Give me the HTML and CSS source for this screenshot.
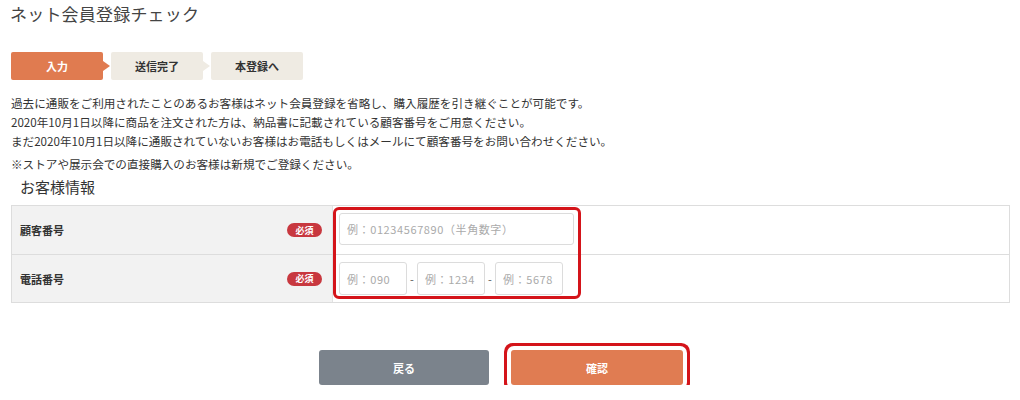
FILE: index.html
```html
<!DOCTYPE html>
<html lang="ja">
<head>
<meta charset="utf-8">
<title>ネット会員登録チェック</title>
<link rel="stylesheet" href="styles.css">
</head>
<body>
<div class="page">
  <h1 class="title">ネット会員登録チェック</h1>

  <ol class="steps">
    <li class="step step-active">入力</li>
    <li class="step step-next">送信完了</li>
    <li class="step">本登録へ</li>
  </ol>

  <div class="notes">
    <p class="note-block">過去に通販をご利用されたことのあるお客様はネット会員登録を省略し、購入履歴を引き継ぐことが可能です。<br>2020年10月1日以降に商品を注文された方は、納品書に記載されている顧客番号をご用意ください。<br>まだ2020年10月1日以降に通販されていないお客様はお電話もしくはメールにて顧客番号をお問い合わせください。</p>
    <p class="note-extra">※ストアや展示会での直接購入のお客様は新規でご登録ください。</p>
  </div>

  <h2 class="section-title">お客様情報</h2>

  <div class="form-table">
    <div class="row">
      <div class="label-cell">
        <span class="label">顧客番号</span>
        <span class="badge">必須</span>
      </div>
      <div class="input-cell">
        <input class="field field-wide" type="text" placeholder="例：01234567890（半角数字）">
      </div>
    </div>
    <div class="row">
      <div class="label-cell">
        <span class="label">電話番号</span>
        <span class="badge">必須</span>
      </div>
      <div class="input-cell">
        <input class="field field-tel" type="text" placeholder="例：090">
        <span class="dash">-</span>
        <input class="field field-tel" type="text" placeholder="例：1234">
        <span class="dash">-</span>
        <input class="field field-tel" type="text" placeholder="例：5678">
      </div>
    </div>
    <div class="highlight"></div>
  </div>

  <div class="actions">
    <button class="btn btn-back" type="button">戻る</button>
    <button class="btn btn-confirm" type="button">確認</button>
  </div>
</div>
</body>
</html>
```

FILE: styles.css
```css
* {
  box-sizing: border-box;
}

html, body {
  margin: 0;
  padding: 0;
  background: #ffffff;
}

body {
  font-family: "Noto Sans CJK JP", "Noto Sans", sans-serif;
  color: #333333;
}

.page {
  width: 1020px;
  padding: 0 10px 0 11px;
}

.title {
  margin: 2px 0 0 -1px;
  font-size: 17px;
  line-height: 24px;
  font-weight: 400;
  color: #444444;
  letter-spacing: 0.2px;
}

.steps {
  list-style: none;
  margin: 26px 0 0;
  padding: 0;
  display: flex;
  gap: 8px;
}

.step {
  position: relative;
  width: 92px;
  height: 28px;
  border-radius: 2px;
  background: #efebe3;
  color: #333333;
  font-size: 11px;
  font-weight: 700;
  display: flex;
  align-items: center;
  justify-content: center;
}

.step-active {
  background: #e07b50;
  color: #ffffff;
}

.step-active::after,
.step-next::after {
  content: "";
  position: absolute;
  right: -7px;
  top: 9px;
  border-top: 5px solid transparent;
  border-bottom: 5px solid transparent;
  border-left: 7px solid #e07b50;
}

.step-next::after {
  border-left-color: #efebe3;
}

.notes {
  margin-top: 14px;
  font-size: 11.6px;
  line-height: 19px;
  color: #333333;
}

.note-block {
  margin: 0;
}

.note-extra {
  margin: 4px 0 0;
}

.section-title {
  margin: 3px 0 0 9px;
  font-size: 15px;
  line-height: 20px;
  font-weight: 400;
  color: #333333;
}

.form-table {
  position: relative;
  margin-top: 8px;
  border: 1px solid #dddddd;
}

.row {
  display: flex;
  height: 48px;
}

.row + .row {
  border-top: 1px solid #dddddd;
}

.label-cell {
  width: 321px;
  background: #f2f2f2;
  border-right: 1px solid #e2e2e2;
  display: flex;
  align-items: center;
  justify-content: space-between;
  padding: 0 10px 0 8px;
}

.label {
  font-size: 11px;
  font-weight: 700;
  color: #333333;
}

.badge {
  width: 35px;
  height: 14px;
  border-radius: 7px;
  background: #c8383f;
  color: #ffffff;
  font-size: 9px;
  font-weight: 700;
  display: flex;
  align-items: center;
  justify-content: center;
  line-height: 1;
}

.input-cell {
  flex: 1;
  display: flex;
  align-items: center;
  padding-left: 6px;
}

.field {
  height: 33px;
  border: 1px solid #dcdcdc;
  border-radius: 3px;
  padding: 0 0 0 7px;
  font-family: "Noto Sans CJK JP", sans-serif;
  font-size: 11px;
  color: #333333;
  background: #ffffff;
  outline: none;
}

.field::placeholder {
  color: #aaaaaa;
  letter-spacing: 0.6px;
}

.field-wide {
  width: 235px;
  height: 32px;
  margin-top: -2px;
}

.field-tel {
  width: 68px;
}

.dash {
  width: 10px;
  text-align: center;
  font-size: 11px;
  color: #555555;
}

.highlight {
  position: absolute;
  left: 321px;
  top: 1px;
  width: 248px;
  height: 92px;
  border: 3px solid #d4141a;
  border-radius: 6px;
  pointer-events: none;
}

.actions {
  display: flex;
  justify-content: center;
  gap: 22px;
  margin-top: 47px;
  padding-right: 19px;
}

.btn {
  height: 35px;
  border: none;
  border-radius: 3px;
  color: #ffffff;
  font-family: "Noto Sans CJK JP", sans-serif;
  font-size: 11px;
  font-weight: 700;
  cursor: pointer;
}

.btn-back {
  width: 170px;
  background: #7b838c;
}

.btn-confirm {
  width: 172px;
  background: #e07c52;
  box-shadow: 0 0 0 4px #ffffff, 0 0 0 7px #d4141a;
}
```
